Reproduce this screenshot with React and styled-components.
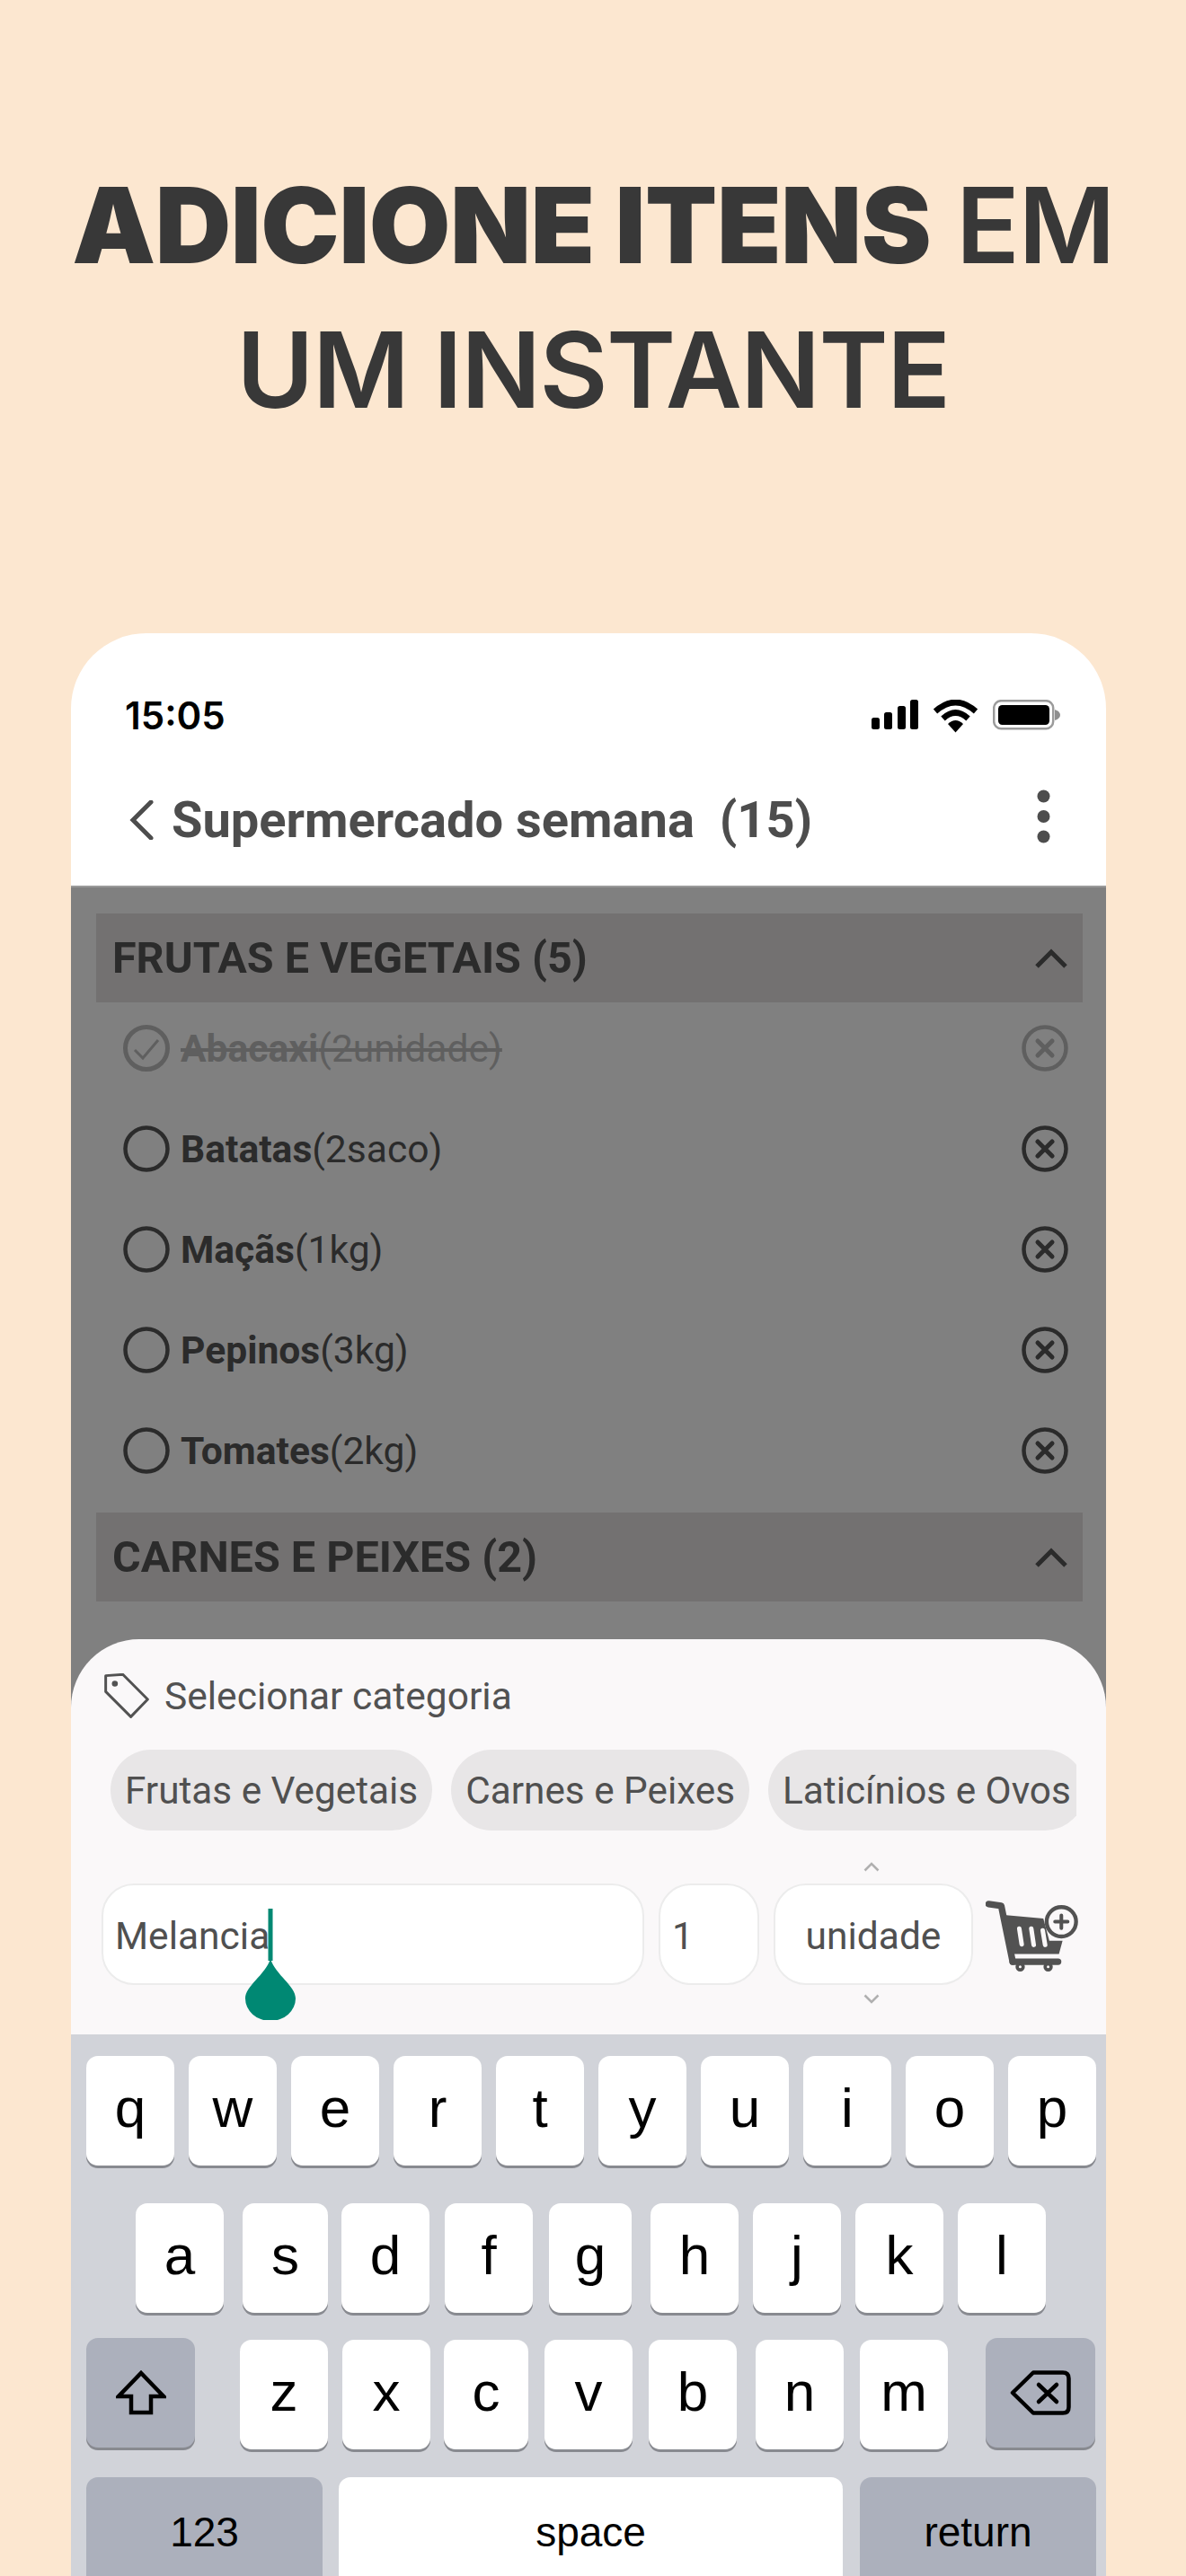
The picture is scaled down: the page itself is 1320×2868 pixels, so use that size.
import React from "react";
import styled, { createGlobalStyle } from "styled-components";

const Global = createGlobalStyle`
  html, body { margin: 0; padding: 0; background: #fce7d0; }
  * { box-sizing: border-box; }
`;

const Page = styled.div`
  width: 1320px;
  height: 2868px;
  overflow: hidden;
  background: #fce7d0;
  font-family: Roboto, "Liberation Sans", sans-serif;
`;

const Headline = styled.h1`
  margin: 0;
  height: 705px;
  padding-top: 170px;
  text-align: center;
  font-family: Inter, "Liberation Sans", sans-serif;
  font-size: 117px;
  line-height: 161px;
  font-weight: 600;
  letter-spacing: -1.5px;
  color: #383838;
  white-space: nowrap;
`;

const Line = styled.span`
  display: block;
`;

const Strong = styled.strong`
  font-weight: 900;
  letter-spacing: -0.5px;
`;

const Phone = styled.div`
  width: 1152px;
  height: 2163px;
  margin-left: 79px;
  border-radius: 84px 84px 0 0;
  overflow: hidden;
  background: #fff;
  display: flex;
  flex-direction: column;
`;

const StatusBar = styled.div`
  flex: none;
  height: 140px;
  padding: 74px 50px 0 60px;
  display: flex;
  justify-content: space-between;
  align-items: flex-start;
`;

const StatusIcons = styled.div`
  display: flex;
  align-items: flex-start;
  gap: 16px;
`;

const Clock = styled.div`
  font-family: Inter, "Liberation Sans", sans-serif;
  font-size: 42px;
  line-height: 36px;
  font-weight: 600;
  letter-spacing: 0;
  color: #000;
`;

const AppBar = styled.div`
  flex: none;
  height: 143px;
  padding: 0 62px 6px 65px;
  display: flex;
  align-items: center;
  color: #4d4d4d;
  border-bottom: 2px solid #9a9a9a;
`;

const AppTitle = styled.div`
  flex: 1;
  margin-left: 20px;
  font-size: 56px;
  font-weight: 700;
  line-height: 60px;
  white-space: pre;
`;

const Dots = styled.div`
  line-height: 0;
  margin-top: -8px;
`;

const Dimmed = styled.div`
  flex: 1;
  min-height: 0;
  display: flex;
  flex-direction: column;
  background: #808080;
`;

const List = styled.div`
  height: 837px;
  padding: 29px 26px 0 28px;
  flex: none;
`;

const CategoryBar = styled.div`
  height: 99px;
  padding: 0 17px 0 18px;
  display: flex;
  align-items: center;
  justify-content: space-between;
  background: #737171;
  color: #2b2b2b;
  font-size: 48.5px;
  font-weight: 700;
`;

const Rows = styled.div`
  margin: -5px 0 13px;
  padding: 0 16px 0 30px;
`;

const Item = styled.div`
  height: 112px;
  display: flex;
  align-items: center;
  color: #2b2b2b;
  opacity: ${(p) => (p.$done ? 0.38 : 1)};
`;

const ItemText = styled.div`
  flex: 1;
  margin-left: 12px;
  font-size: 42.6px;
  line-height: 50px;
  text-decoration: ${(p) => (p.$done ? "line-through" : "none")};
`;

const ItemName = styled.b`
  font-weight: 700;
`;

const Sheet = styled.div`
  flex: 1;
  min-height: 0;
  display: flex;
  flex-direction: column;
  background: #faf8f9;
  border-radius: 76px 76px 0 0;
  overflow: hidden;
`;

const SheetBody = styled.div`
  height: 440px;
  flex: none;
`;

const CategoryPrompt = styled.div`
  padding: 39px 0 0 37px;
  display: flex;
  align-items: center;
  height: 87px;
  color: #525252;
  font-size: 42.5px;
`;

const PromptText = styled.span`
  margin-left: 17px;
`;

const Chips = styled.div`
  margin: 36px 33px 0 44px;
  display: flex;
  gap: 21px;
  overflow: hidden;
`;

const Chip = styled.div`
  flex: none;
  height: 90px;
  padding: 0 16px;
  display: flex;
  align-items: center;
  border-radius: 45px;
  background: #e8e6e7;
  color: #505050;
  font-size: 42.3px;
`;

const Inputs = styled.div`
  margin-top: 59px;
  padding-left: 34px;
  display: flex;
  align-items: flex-start;
`;

const Field = styled.div`
  position: relative;
  flex: none;
  width: ${(p) => p.$w}px;
  height: 113px;
  margin-right: ${(p) => p.$mr}px;
  padding: 4px ${(p) => p.$pad}px 0;
  display: flex;
  align-items: center;
  justify-content: ${(p) => (p.$center ? "center" : "flex-start")};
  background: #fff;
  border: 2px solid #ececec;
  border-radius: 36px;
  color: #505050;
  font-size: 42.5px;
`;

const Caret = styled.svg`
  position: absolute;
  left: 158px;
  top: 26px;
`;

const Stepper = styled.svg`
  position: absolute;
  left: 98px;
  top: ${(p) => p.$top}px;
`;

const CartWrap = styled.div`
  margin: 19px 0 0 14px;
  line-height: 0;
`;

const Keyboard = styled.div`
  flex: 1;
  min-height: 0;
  background: #d1d3d9;
  padding-top: 24px;
  font-family: "Liberation Sans", Arial, sans-serif;
  color: #000;
`;

const KeyRow = styled.div`
  display: flex;
  align-items: flex-start;
  margin-top: ${(p) => p.$mt}px;
`;

const Key = styled.div`
  flex: none;
  width: ${(p) => p.$w}px;
  height: ${(p) => p.$h || 122}px;
  margin-left: ${(p) => p.$ml}px;
  margin-top: ${(p) => p.$mt || 0}px;
  display: flex;
  align-items: center;
  justify-content: center;
  background: ${(p) => (p.$fn ? "#acb0bc" : "#fff")};
  border-radius: 13px;
  box-shadow: 0 3px 0 #888a90;
  font-size: ${(p) => p.$fs || 62}px;
  line-height: 1;
  padding-bottom: ${(p) => p.$pb ?? 6}px;
`;

const Chevron = ({ color = "#2b2b2b" }) => (
  <svg width="36" height="22" viewBox="0 0 36 22" fill="none">
    <path d="M2 20 L18 4 L34 20" stroke={color} strokeWidth="5" />
  </svg>
);

const BackArrow = () => (
  <svg width="27" height="44" viewBox="0 0 27 44" fill="none">
    <path d="M24 2 L4 22 L24 42" stroke="#4d4d4d" strokeWidth="5" strokeLinecap="round" />
  </svg>
);

const RemoveIcon = () => (
  <svg width="52" height="52" viewBox="0 0 52 52" fill="none" stroke="currentColor">
    <circle cx="26" cy="26" r="23.500" strokeWidth="4.500" />
    <path d="M18 18 L34 34 M34 18 L18 34" strokeWidth="5" strokeLinecap="round" />
  </svg>
);

const CircleIcon = ({ checked }) => (
  <svg width="52" height="52" viewBox="0 0 52 52" fill="none" stroke="currentColor">
    <circle cx="26" cy="26" r="23.500" strokeWidth={checked ? 5 : 4.5} />
    {checked && <path d="M13 28 L22 37 L39 17" strokeWidth="3" />}
  </svg>
);

const SignalIcon = () => (
  <svg width="52" height="33" viewBox="0 0 52 33" fill="#000">
    <rect x="0" y="20" width="9" height="13" rx="2.500" />
    <rect x="14" y="14" width="9" height="19" rx="2.500" />
    <rect x="29" y="7" width="9" height="26" rx="2.500" />
    <rect x="43" y="0" width="9" height="33" rx="2.500" />
  </svg>
);

const WifiIcon = () => (
  <svg width="51" height="37" viewBox="0 0 51 37">
    <path d="M3 13 Q25.500 -7 48 13" fill="none" stroke="#000" strokeWidth="6.500" />
    <path d="M11.500 21 Q25.500 8 39.500 21" fill="none" stroke="#000" strokeWidth="6.500" />
    <path d="M25.500 36.500 L17 27 Q25.500 19 34 27 Z" fill="#000" />
  </svg>
);

const BatteryIcon = () => (
  <svg width="76" height="34" viewBox="0 0 76 34">
    <rect x="1.200" y="1.200" width="66" height="31" rx="8" fill="none" stroke="#9b9b9b" strokeWidth="2.500" />
    <rect x="6" y="6" width="57" height="22" rx="4.500" fill="#000" />
    <path d="M69 11 Q75 13 75 17 Q75 21 69 23 Z" fill="#8e8e8e" />
  </svg>
);

const MenuDots = () => (
  <svg width="15" height="60" viewBox="0 0 15 60" fill="#4d4d4d">
    <circle cx="7.500" cy="7.500" r="7" />
    <circle cx="7.500" cy="30" r="7" />
    <circle cx="7.500" cy="52.500" r="7" />
  </svg>
);

const TagIcon = () => (
  <svg width="50" height="50" viewBox="45 38 152 152" fill="none" stroke="#525252" strokeWidth="9" strokeLinejoin="round">
    <path d="M50 46 L108 42 L192 126 L135 185 L50 100 Z" />
    <circle cx="81" cy="73" r="10" fill="#525252" stroke="none" />
  </svg>
);

const CartIcon = () => (
  <svg width="103" height="79" viewBox="500 197 308 235" fill="none">
    <path d="M510 208 L552 214 L590 400" stroke="#525252" strokeWidth="22" strokeLinecap="round" strokeLinejoin="round" />
    <path d="M560 244 L692 256 L712 330 L756 330 L744 374 L588 374 Z" fill="#525252" />
    <path d="M612 290 L620 342 M652 290 L660 344 M690 296 L698 344" stroke="#faf8f9" strokeWidth="15" strokeLinecap="round" />
    <path d="M590 400 L741 400" stroke="#525252" strokeWidth="22" strokeLinecap="round" />
    <circle cx="615" cy="417" r="10" fill="#faf8f9" stroke="#525252" strokeWidth="11" />
    <circle cx="708" cy="417" r="10" fill="#faf8f9" stroke="#525252" strokeWidth="11" />
    <circle cx="752" cy="267" r="49" fill="#faf8f9" stroke="#525252" strokeWidth="13" />
    <path d="M731 267 L773 267 M752 246 L752 288" stroke="#525252" strokeWidth="12" strokeLinecap="round" />
  </svg>
);

const ShiftIcon = () => (
  <svg width="56" height="50" viewBox="0 0 56 50" fill="none" stroke="#000" strokeWidth="4.500" strokeLinejoin="miter">
    <path d="M28 3 L53 29 L39 29 L39 47 L17 47 L17 29 L3 29 Z" />
  </svg>
);

const DeleteIcon = () => (
  <svg width="68" height="50" viewBox="0 0 68 50" fill="none" stroke="#000" strokeWidth="4.500" strokeLinejoin="round">
    <path d="M26 2.500 L59 2.500 Q65.500 2.500 65.500 9 L65.500 41 Q65.500 47.500 59 47.500 L26 47.500 L3 25 Z" />
    <path d="M32 16 L52 35 M52 16 L32 35" strokeLinecap="round" />
  </svg>
);

const items = [
  ["Abacaxi", "(2unidade)", true],
  ["Batatas", "(2saco)"],
  ["Maçãs", "(1kg)"],
  ["Pepinos", "(3kg)"],
  ["Tomates", "(2kg)"],
];

const row1 = "qwertyuiop".split("").map((c, i) => [c, i === 0 ? 17 : 16, 98]);
const row2 = [
  ["a", 72, 98], ["s", 21, 95], ["d", 15, 98], ["f", 17, 98], ["g", 18, 92],
  ["h", 21, 98], ["j", 16, 98], ["k", 16, 98], ["l", 16, 98],
];
const row3 = [
  ["z", 50, 98], ["x", 16, 98], ["c", 15, 94], ["v", 18, 98],
  ["b", 18, 98], ["n", 21, 98], ["m", 18, 98],
];

export default function App() {
  return (
    <Page>
      <Global />
      <Headline>
        <Line>
          <Strong>ADICIONE ITENS</Strong> EM
        </Line>
        <Line>UM INSTANTE</Line>
      </Headline>
      <Phone>
        <StatusBar>
          <Clock>15:05</Clock>
          <StatusIcons>
            <SignalIcon />
            <WifiIcon />
            <BatteryIcon />
          </StatusIcons>
        </StatusBar>
        <AppBar>
          <BackArrow />
          <AppTitle>Supermercado semana  (15)</AppTitle>
          <Dots>
            <MenuDots />
          </Dots>
        </AppBar>
        <Dimmed>
          <List>
            <CategoryBar>
              FRUTAS E VEGETAIS (5)
              <Chevron />
            </CategoryBar>
            <Rows>
              {items.map(([name, qty, done]) => (
                <Item key={name} $done={done}>
                  <CircleIcon checked={done} />
                  <ItemText $done={done}>
                    <ItemName>{name}</ItemName>
                    {qty}
                  </ItemText>
                  <RemoveIcon />
                </Item>
              ))}
            </Rows>
            <CategoryBar>
              CARNES E PEIXES (2)
              <Chevron />
            </CategoryBar>
          </List>
          <Sheet>
            <SheetBody>
              <CategoryPrompt>
                <TagIcon />
                <PromptText>Selecionar categoria</PromptText>
              </CategoryPrompt>
              <Chips>
                <Chip>Frutas e Vegetais</Chip>
                <Chip>Carnes e Peixes</Chip>
                <Chip>Laticínios e Ovos</Chip>
              </Chips>
              <Inputs>
                <Field $w={604} $mr={16} $pad={13}>
                  Melancia
                  <Caret width="56" height="124" viewBox="0 0 56 124">
                    <rect x="25.500" y="0" width="5" height="58" fill="#008873" />
                    <path d="M28 56 C34 74 56 86 56 100 A28 25 0 0 1 0 100 C0 86 22 74 28 56 Z" fill="#008873" />
                  </Caret>
                </Field>
                <Field $w={112} $mr={16} $pad={13}>1</Field>
                <Field $w={222} $mr={0} $pad={0} $center>
                  <Stepper $top={-26} width="18" height="11" viewBox="0 0 36 22" fill="none">
                    <path d="M3 19 L18 4 L33 19" stroke="#b0b0b0" strokeWidth="5" />
                  </Stepper>
                  unidade
                  <Stepper $top={121} width="18" height="11" viewBox="0 0 36 22" fill="none">
                    <path d="M3 3 L18 18 L33 3" stroke="#b0b0b0" strokeWidth="5" />
                  </Stepper>
                </Field>
                <CartWrap>
                  <CartIcon />
                </CartWrap>
              </Inputs>
            </SheetBody>
            <Keyboard>
              <KeyRow $mt={0}>
                {row1.map(([c, ml, w]) => (
                  <Key key={c} $ml={ml} $w={w}>{c}</Key>
                ))}
              </KeyRow>
              <KeyRow $mt={42}>
                {row2.map(([c, ml, w]) => (
                  <Key key={c} $ml={ml} $w={w}>{c}</Key>
                ))}
              </KeyRow>
              <KeyRow $mt={28}>
                <Key $fn $ml={17} $w={121} $h={122} $pb={1}>
                  <ShiftIcon />
                </Key>
                {row3.map(([c, ml, w]) => (
                  <Key key={c} $ml={ml} $w={w} $mt={2}>{c}</Key>
                ))}
                <Key $fn $ml={42} $w={122} $h={122} $pb={1}>
                  <DeleteIcon />
                </Key>
              </KeyRow>
              <KeyRow $mt={31}>
                <Key $fn $ml={17} $w={263} $h={140} $fs={46} $pb={18}>123</Key>
                <Key $ml={18} $w={561} $h={140} $fs={46} $pb={18}>space</Key>
                <Key $fn $ml={19} $w={263} $h={140} $fs={46} $pb={18}>return</Key>
              </KeyRow>
            </Keyboard>
          </Sheet>
        </Dimmed>
      </Phone>
    </Page>
  );
}
